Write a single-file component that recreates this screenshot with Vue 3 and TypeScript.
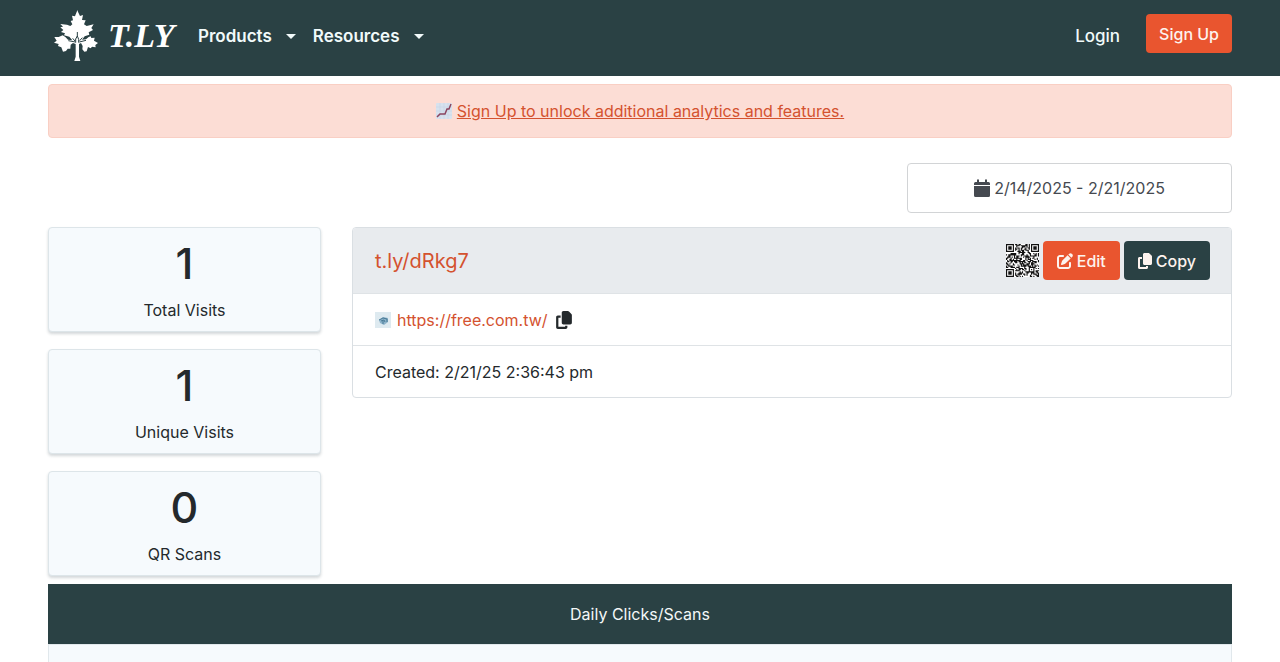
<script setup lang="ts">
interface Stat {
  value: number
  label: string
}

const stats: Stat[] = [
  { value: 1, label: 'Total Visits' },
  { value: 1, label: 'Unique Visits' },
  { value: 0, label: 'QR Scans' },
]

const menus: string[] = ['Products', 'Resources']

const QR_SIZE = 29

function finderModule(x: number, y: number): boolean | null {
  const corners = [[0, 0], [QR_SIZE - 7, 0], [0, QR_SIZE - 7]]
  for (const [cx, cy] of corners) {
    const dx = x - cx
    const dy = y - cy
    if (dx >= -1 && dx <= 7 && dy >= -1 && dy <= 7) {
      const ring = Math.max(Math.abs(dx - 3), Math.abs(dy - 3))
      return ring === 3 || ring <= 1
    }
  }
  const align = Math.max(Math.abs(x - 22), Math.abs(y - 22))
  if (align <= 2) return align !== 1
  return null
}

function buildQrPath(): string {
  let seed = 7919
  let d = ''
  for (let y = 0; y < QR_SIZE; y++) {
    for (let x = 0; x < QR_SIZE; x++) {
      seed = (seed * 1103515245 + 12345) % 2147483648
      const fixed = finderModule(x, y)
      const dark = fixed === null ? seed / 2147483648 > 0.46 : fixed
      if (dark) d += `M${x} ${y}h1v1h-1z`
    }
  }
  return d
}

const qrPath = buildQrPath()

const copyPath =
  'M208 0H332c12.700 0 24.900 5.100 33.900 14.100l67.900 67.900c9 9 14.100 21.200 14.100 33.900V336c0 26.500-21.500 48-48 48H208c-26.500 0-48-21.500-48-48V48c0-26.500 21.500-48 48-48zM48 128h80v64H64V448H256V416h64v48c0 26.500-21.500 48-48 48H48c-26.500 0-48-21.500-48-48V176c0-26.500 21.500-48 48-48z'
</script>

<template>
  <div class="page">
    <header class="navbar">
      <a class="brand" href="#" aria-label="T.LY home">
        <svg class="tree" viewBox="12 14 132 156" aria-hidden="true">
          <path
            fill="#fff"
            d="M82 14C84 22 88 27 90 32L99 29L96 44L107 45L102 57L110 62L131 57L124 68L129 74L116 81L118 88L104 93L96 103L108 102L116 95L122 93L124 98L134 97L132 106L144 113L136 119L137 126L126 124L122 129L114 125L110 138L103 139L97 132L98 122L93 113L87 116V154L91 167H73L77 154V116L69 113L62 118L61 130L53 130L48 137L39 139L34 126L24 122L26 116L12 112L20 106L13 95L26 95L38 90L46 95L54 103L67 105L58 94L42 90L45 84L33 80L40 74L31 66L39 64L31 56L51 58L61 62L67 57L62 47L69 45L66 31L75 33C77 26 80 21 82 14Z"
          />
          <path
            fill="none"
            stroke="#2a4144"
            stroke-width="3"
            d="M55 106L76 110M108 105L88 110M77 112V101L82 92L86 102V112M82 80V94M68 99L75 107M97 97L89 106"
          />
        </svg>
        <span class="wordmark">T.LY</span>
      </a>
      <nav class="menus" aria-label="Main">
        <button v-for="menu in menus" :key="menu" class="menu" type="button">
          {{ menu }}<span class="caret"></span>
        </button>
      </nav>
      <div class="account">
        <a class="login" href="#">Login</a>
        <a class="btn orange signup" href="#">Sign Up</a>
      </div>
    </header>

    <main class="content">
      <div class="alert">
        <svg class="chart" viewBox="0 0 16 16" aria-hidden="true">
          <rect width="16" height="16" rx="1" fill="#d7e2ee" />
          <path d="M4 0v16M8 0v16M12 0v16M0 4h16M0 8h16M0 12h16" stroke="#c6d5e4" stroke-width=".6" />
          <path d="M1 14l3-3 5 0 2-5 2 0 2-5" fill="none" stroke="#8b4560" stroke-width="1.500" />
        </svg>
        <a href="#">Sign Up to unlock additional analytics and features.</a>
      </div>

      <div class="toolbar">
        <button class="dates" type="button">
          <svg class="calendar" viewBox="0 0 16 18" aria-hidden="true">
            <path fill="#454950" d="M3 1.200a1 1 0 0 1 2 0V3h6V1.200a1 1 0 0 1 2 0V3h1.500A1.500 1.500 0 0 1 16 4.500V6H0V4.500A1.500 1.500 0 0 1 1.500 3H3zM0 7h16v9.500a1.500 1.500 0 0 1-1.500 1.500h-13A1.500 1.500 0 0 1 0 16.500z" />
          </svg>
          2/14/2025 - 2/21/2025
        </button>
      </div>

      <div class="columns">
        <section class="stats" aria-label="Statistics">
          <div v-for="stat in stats" :key="stat.label" class="stat">
            <div class="value">{{ stat.value }}</div>
            <div class="label">{{ stat.label }}</div>
          </div>
        </section>

        <section class="link-card">
          <div class="link-head">
            <a class="short" href="#">t.ly/dRkg7</a>
            <div class="actions">
              <svg class="qr" viewBox="0 0 29 29" role="img" aria-label="QR code">
                <rect width="29" height="29" fill="#fff" />
                <path :d="qrPath" fill="#111" />
              </svg>
              <button class="btn orange" type="button">
                <svg class="icon" viewBox="0 0 512 512" aria-hidden="true">
                  <path fill="currentColor" d="M471.600 21.700c-21.900-21.900-57.300-21.900-79.200 0L362.300 51.700l97.900 97.900 30.100-30.100c21.900-21.900 21.900-57.300 0-79.200L471.600 21.700zm-299.200 220c-6.100 6.100-10.800 13.600-13.500 21.900l-29.600 88.800c-2.900 8.600-.6 18.100 5.800 24.600s15.900 8.700 24.600 5.800l88.800-29.600c8.200-2.700 15.700-7.400 21.900-13.500L437.700 172.300 339.700 74.300 172.400 241.700zM96 64C43 64 0 107 0 160V416c0 53 43 96 96 96H352c53 0 96-43 96-96V320c0-17.700-14.300-32-32-32s-32 14.300-32 32v96c0 17.700-14.300 32-32 32H96c-17.700 0-32-14.300-32-32V160c0-17.700 14.300-32 32-32h96c17.700 0 32-14.300 32-32s-14.300-32-32-32H96z" />
                </svg>
                Edit
              </button>
              <button class="btn dark" type="button">
                <svg class="copy-icon" viewBox="0 0 448 512" aria-hidden="true">
                  <path fill="currentColor" :d="copyPath" />
                </svg>
                Copy
              </button>
            </div>
          </div>
          <div class="link-row">
            <svg class="favicon" viewBox="0 0 16 16" aria-hidden="true">
              <rect width="16" height="16" fill="#deeaf0" />
              <path d="M4 8l4-3 5 1v4l-4 3-4-2z" fill="#8db3ca" />
              <path d="M4 8l4-2 4 1v3M8 9v3M6 9l3-1 1 2" fill="none" stroke="#477995" stroke-width="1" />
            </svg>
            <a href="#">https://free.com.tw/</a>
            <button class="copy-url" type="button" aria-label="Copy URL">
              <svg class="copy-icon large" viewBox="0 0 448 512" aria-hidden="true">
                <path fill="currentColor" :d="copyPath" />
              </svg>
            </button>
          </div>
          <div class="link-row">Created: 2/21/25 2:36:43 pm</div>
        </section>
      </div>

      <section class="daily">
        <h2>Daily Clicks/Scans</h2>
        <div class="daily-body"></div>
      </section>
    </main>
  </div>
</template>

<style>
body {
  margin: 0;
  background: #fff;
}
</style>

<style scoped>
.page {
  display: flex;
  flex-direction: column;
  min-height: 100vh;
  color: #24292c;
  font-family: Inter, "Liberation Sans", sans-serif;
  font-size: 16px;
  line-height: 26px;
}
.page *,
.page {
  box-sizing: border-box;
}
a {
  color: #d4522f;
  text-decoration: none;
}
button {
  font: inherit;
  color: inherit;
  border: 0;
  background: none;
  cursor: pointer;
}
svg {
  display: block;
  flex: none;
}
.navbar {
  display: flex;
  align-items: center;
  padding: 10px 48px 14px;
  background: #2a4144;
}
.brand {
  display: flex;
  align-items: center;
  gap: 10px;
  margin: 0 24px 0 6px;
}
.tree {
  width: 44px;
  height: 52px;
}
.wordmark {
  width: 66px;
  color: #fff;
  font: italic bold 34px/40px "Liberation Serif", serif;
}
.menus {
  display: flex;
  gap: 17px;
}
.menu {
  display: flex;
  align-items: center;
  gap: 14px;
  padding: 0;
  color: #f1fafa;
  font-size: 17px;
  font-weight: 600;
}
.caret {
  border: 5px solid transparent;
  border-top-color: currentColor;
  border-bottom: 0;
}
.account {
  display: flex;
  align-items: center;
  gap: 26px;
  margin-left: auto;
}
.login {
  color: #f1fafa;
  font-size: 17px;
  font-weight: 500;
}
.btn {
  display: flex;
  align-items: center;
  justify-content: center;
  gap: 4px;
  height: 39px;
  padding: 0 14px;
  border-radius: 4px;
  color: #fdf3ee;
  font-weight: 500;
}
.orange {
  background: #e9552f;
}
.dark {
  background: #2a4144;
}
.signup {
  margin-bottom: 5px;
  padding: 0 13px;
}
.icon {
  width: 16px;
  height: 16px;
}
.content {
  display: flex;
  flex: 1;
  flex-direction: column;
  padding: 8px 48px 0;
}
.alert {
  display: flex;
  align-items: center;
  justify-content: center;
  gap: 5px;
  padding: 13px;
  border: 1px solid #f9cfc4;
  border-radius: 4px;
  background: #fcddd5;
}
.alert a {
  text-decoration: underline;
}
.chart {
  width: 16px;
  height: 16px;
}
.toolbar {
  display: flex;
  justify-content: flex-end;
  margin: 25px 0 14px;
}
.dates {
  display: flex;
  align-items: center;
  justify-content: center;
  gap: 4px;
  width: 325px;
  height: 50px;
  border: 1px solid #d2d4d6;
  border-radius: 4px;
  background: #fff;
  color: #454950;
}
.calendar {
  width: 16px;
  height: 18px;
}
.columns {
  display: grid;
  grid-template-columns: 273fr 880fr;
  align-items: start;
  gap: 31px;
}
.stats {
  display: grid;
  gap: 17px;
}
.stat {
  padding: 9px 16px 8px;
  border: 1px solid #dde5e9;
  border-radius: 4px;
  background: #f6fafd;
  box-shadow: 0 2px 3px rgba(40, 60, 70, 0.2);
  text-align: center;
}
.value {
  margin-bottom: 7px;
  font-size: 43px;
  font-weight: 500;
  line-height: 53px;
}
.link-card {
  overflow: hidden;
  border: 1px solid #dadfe3;
  border-radius: 4px;
}
.link-head {
  display: flex;
  align-items: center;
  justify-content: space-between;
  padding: 13px 21px 13px 22px;
  background: #e8ebee;
}
.short {
  font-size: 20px;
}
.actions {
  display: flex;
  align-items: center;
  gap: 4px;
}
.qr {
  width: 33px;
  height: 33px;
}
.link-row {
  display: flex;
  align-items: center;
  gap: 6px;
  padding: 13px 22px 12px;
  border-top: 1px solid #dfe3e6;
}
.favicon {
  width: 16px;
  height: 16px;
}
.copy-url {
  padding: 0 2px;
}
.copy-icon {
  width: 14px;
  height: 16px;
}
.large {
  width: 16px;
  height: 18px;
}
.daily {
  display: flex;
  flex: 1;
  flex-direction: column;
  margin-top: 8px;
}
h2 {
  margin: 0;
  padding: 17px;
  background: #2a4144;
  color: #f4f8f8;
  font-size: 16px;
  font-weight: 400;
  line-height: 26px;
  text-align: center;
}
.daily-body {
  flex: 1;
  border: 1px solid #e1e8ec;
  border-bottom: 0;
  background: #f6fafd;
}
</style>
